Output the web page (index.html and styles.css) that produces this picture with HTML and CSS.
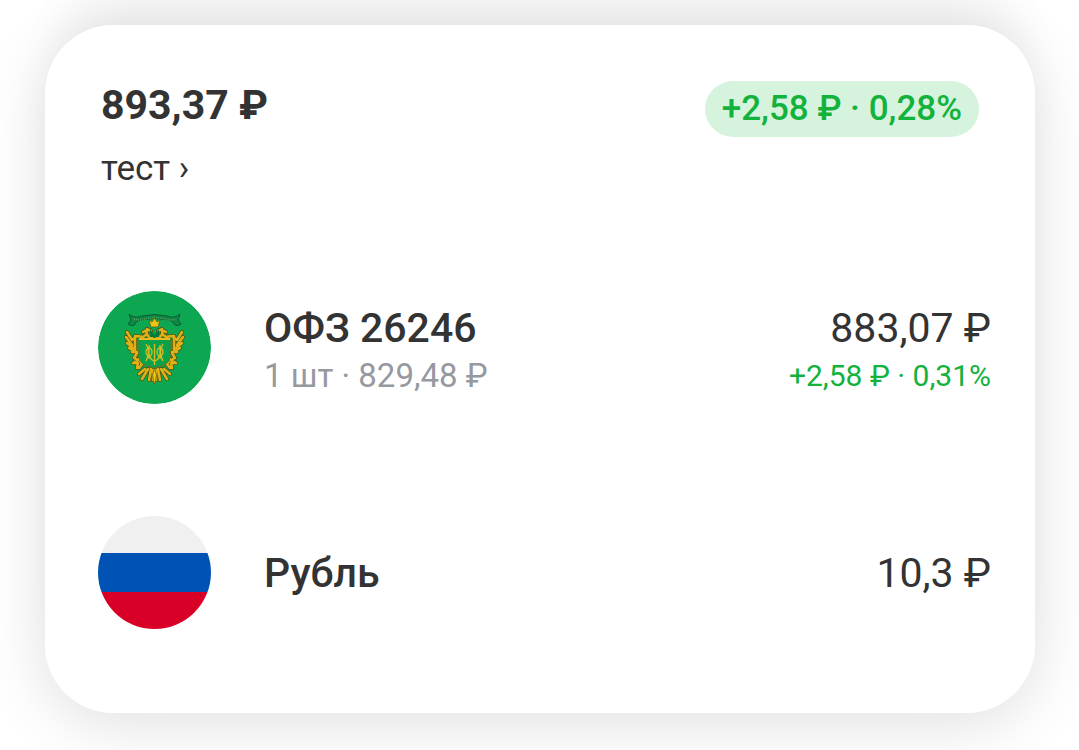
FILE: index.html
```
<!DOCTYPE html>
<html lang="ru">
<head>
    <meta charset="UTF-8">
    <meta name="viewport" content="width=device-width, initial-scale=1.0">
    <title>Портфель</title>
    <link rel="stylesheet" href="styles.css">
</head>
<body>
    <main class="card">
        <header class="summary">
            <div>
                <h1 class="total">893,37 ₽</h1>
                <a class="account" href="#">тест ›</a>
            </div>
            <span class="badge">+2,58 ₽ · 0,28%</span>
        </header>
        <ul class="assets">
            <li class="asset">
                <svg class="logo" viewBox="0 0 113 113" aria-hidden="true">
                    <defs>
                        <!-- left half of the eagle, drawn as strokes -->
                        <g id="feathers" fill="none" stroke-linecap="round" stroke-linejoin="round">
                            <path d="M29 41l5 8 5-4 6 1 4-3M28 46l6 8M29 52l6 5M31 57l5 3M34 61l5 0M37 45v15"/>
                            <path d="M39 62l-3 5 4 2-5 3 5 0-1 5M41 68l3 5-3 4"/>
                            <path d="M53 78l-2 11M50 78l-6 10M47 78l-6 5M55 79v10"/>
                            <path d="M54 47q-7-2-5-8l-4 2M49 38l4 2"/>
                        </g>
                        <g id="half">
                            <use href="#feathers" stroke="#4d5b1a" stroke-width="4.200"/>
                            <use href="#feathers" stroke="#dfb116" stroke-width="2.500"/>
                        </g>
                    </defs>
                    <circle cx="56.500" cy="56.500" r="56.500" fill="#0ca750"/>
                    <!-- ribbon -->
                    <path d="M31 23q5 5 13 2q12-3 25 0q8 3 13-2l-2 6 3 4q-6 4-8-2l-4-2q-14-3-29 0l-4 2q-2 6-8 2l3-4z" fill="#118748" stroke="#075c35" stroke-width="1"/>
                    <path d="M36 28q6 2 11 0 10-2 20 0 5 2 10 0" fill="none" stroke="#55a457" stroke-width="1.500" stroke-dasharray="1 1"/>
                    <use href="#half"/>
                    <use href="#half" transform="matrix(-1 0 0 1 113 0)"/>
                    <!-- crown -->
                    <path d="M51 29l3 2 2.500-4 2.500 4 3-2-2 7h-7z" fill="#efc414" stroke="#5b651a" stroke-width=".8"/>
                    <path d="M52 38l4.500 6 4.500-6v8h-9z" fill="#08783d"/>
                    <!-- tail -->
                    <path d="M56.500 77l2 7-1 6-1 3-1-3-1-6z" fill="#efc414" stroke="#5b651a" stroke-width=".8"/>
                    <!-- shield with monogram -->
                    <path d="M41 48h31v18q0 8-15.500 11Q41 74 41 66z" fill="#0aa34c" stroke="#67731a" stroke-width="1"/>
                    <path d="M41 48h31" stroke="#e9bb20" stroke-width="2"/>
                    <g fill="none" stroke="#d5bd25" stroke-width="1.300">
                        <path d="M48 53q5 8 0 17M65 53q-5 8 0 17M51 54v14M62 54v14M56.500 53v21M52 64q0 5 4.500 6 4.500-1 4.500-6"/>
                        <ellipse cx="51" cy="61" rx="3" ry="4"/>
                        <ellipse cx="62" cy="61" rx="3" ry="4"/>
                    </g>
                </svg>
                <div class="info">
                    <h2 class="name">ОФЗ 26246</h2>
                    <p class="note">1 шт · 829,48 ₽</p>
                </div>
                <div class="value">
                    <p class="price">883,07 ₽</p>
                    <p class="change">+2,58 ₽ · 0,31%</p>
                </div>
            </li>
            <li class="asset">
                <span class="logo flag"></span>
                <div class="info">
                    <h2 class="name">Рубль</h2>
                </div>
                <div class="value">
                    <p class="price">10,3 ₽</p>
                </div>
            </li>
        </ul>
    </main>
</body>
</html>
```
FILE: styles.css
```
* {
    box-sizing: border-box;
}
body {
    font-family: Roboto, sans-serif;
    background-color: #ffffff;
    color: #333333;
    margin: 0;
    padding: 25px 44px 37px 45px;
    overflow: hidden;
}
h1, h2, p, ul {
    margin: 0;
    padding: 0;
}
.card {
    background-color: #ffffff;
    padding: 56px 44px 84px 53px;
    border-radius: 68px;
    box-shadow: 0 10px 64px rgba(0, 0, 0, 0.13), 0 -48px 48px -16px rgba(0, 0, 0, 0.05);
}
.summary {
    display: flex;
    justify-content: space-between;
    align-items: flex-start;
    padding: 0 12px 0 3px;
}
.total {
    font-size: 41px;
    font-weight: 700;
    line-height: 48px;
}
.account {
    display: block;
    margin-top: 16px;
    font-size: 35px;
    line-height: 48px;
    color: inherit;
    text-decoration: none;
}
.badge {
    padding: 0 17px;
    border-radius: 28px;
    background-color: #d6f3de;
    color: #12b23c;
    font-size: 35px;
    font-weight: 500;
    line-height: 56px;
}
.assets {
    display: flex;
    flex-direction: column;
    gap: 112px;
    margin-top: 98px;
    list-style: none;
}
.asset {
    display: flex;
    align-items: center;
    gap: 53px;
}
.logo {
    flex: none;
    width: 113px;
    height: 113px;
    border-radius: 50%;
}
.flag {
    background: linear-gradient(#f0f0f0 33%, #0052b4 33% 67%, #d80027 67%);
}
.info {
    flex: 1;
}
.name {
    font-size: 41px;
    font-weight: 500;
    line-height: 48px;
}
.note {
    color: #9699a0;
    font-size: 33px;
    line-height: 48px;
}
.value {
    text-align: right;
}
.price {
    font-size: 41px;
    line-height: 48px;
}
.change {
    color: #12b23c;
    font-size: 30px;
    line-height: 48px;
}
/* two-line rows sit a little below the logo's centre */
.info:has(.note), .value:has(.change) {
    padding-top: 9px;
}
```
